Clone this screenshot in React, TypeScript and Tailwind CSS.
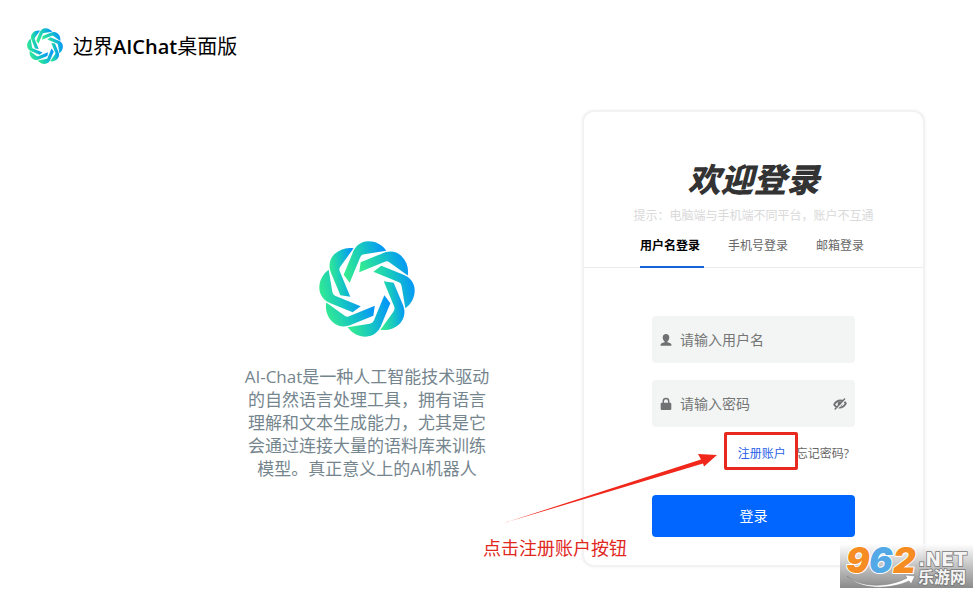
import { useState } from "react";

type Point = [number, number];

const TURNS = [0, 1, 2, 3, 4, 5, 6, 7];

/** One blade of the swirl, turned by an eighth of a circle per step. */
function blade(turn: number): string {
  const a = (turn * Math.PI) / 4;
  const p = ([x, y]: Point) =>
    `${(x * Math.cos(a) - y * Math.sin(a)).toFixed(2)} ${(x * Math.sin(a) + y * Math.cos(a)).toFixed(2)}`;
  return [
    `M${p([-70, -43])}`,
    `L${p([-44, -106])}`,
    `C${p([-36, -129])} ${p([-18, -143])} ${p([4, -143])}`,
    `C${p([26, -143])} ${p([45, -133])} ${p([58, -115])}`,
    `L${p([-8, -104])}`,
    `Q${p([-17, -103])} ${p([-20, -96])}`,
    `L${p([-52, -19])}`,
    "Z",
  ].join(" ");
}

function SwirlLogo({ id, className }: { id: string; className: string }) {
  return (
    <svg viewBox="-144 -144 288 288" className={className} aria-hidden="true">
      <defs>
        <linearGradient id={id} x1="0" y1="0.6" x2="1" y2="0.4">
          <stop offset="0" stopColor="#34ec90" />
          <stop offset="0.5" stopColor="#16c6c2" />
          <stop offset="1" stopColor="#0494fa" />
        </linearGradient>
      </defs>
      {TURNS.map((turn) => (
        <path key={turn} d={blade(turn)} fill={`url(#${id})`} />
      ))}
    </svg>
  );
}

function UserIcon() {
  return (
    <svg viewBox="0 0 12 14" className="h-3.5 w-3 shrink-0" fill="#6f7173" aria-hidden="true">
      <path d="M6 1C3.900 1 2.700 2.500 2.700 4.500C2.700 6.200 3.500 7.700 4.600 8.400V9.300C3.200 9.700 1 10.100 0.600 11.200V12.700H11.400V11.200C11 10.100 8.800 9.700 7.400 9.300V8.400C8.500 7.700 9.300 6.200 9.300 4.500C9.300 2.500 8.100 1 6 1Z" />
    </svg>
  );
}

function LockIcon() {
  return (
    <svg viewBox="0 0 12 14" className="h-3.5 w-3 shrink-0" aria-hidden="true">
      <path d="M3.300 6.500V4.300A2.700 2.700 0 0 1 8.700 4.300V6.500" fill="none" stroke="#6f7173" strokeWidth="1.500" />
      <rect x="0.700" y="5.800" width="10.600" height="7.200" rx="1" fill="#6f7173" />
    </svg>
  );
}

function EyeOffIcon() {
  return (
    <svg viewBox="0 0 14 14" className="h-3.5 w-3.5" fill="none" aria-hidden="true">
      <path d="M1.200 7.600C2.600 4.800 5 3.500 7.400 3.500C9.800 3.500 11.800 4.500 12.800 6.400C11.400 9.200 9.200 10.600 6.700 10.600C4.200 10.600 2.300 9.600 1.200 7.600Z" stroke="#6f7173" strokeWidth="1.900" />
      <circle cx="7" cy="7" r="2.400" fill="#6f7173" />
      <path d="M2.900 13L13.100 2" stroke="#f3f5f5" strokeWidth="1.300" />
      <path d="M1.700 12.500L12 1.500" stroke="#6f7173" strokeWidth="1.400" />
    </svg>
  );
}

const TABS = ["用户名登录", "手机号登录", "邮箱登录"];

function LoginCard() {
  const [active, setActive] = useState(0);
  const [visible, setVisible] = useState(false);

  return (
    <section className="relative w-[343px] shrink-0 rounded-xl border-2 border-[#f2f2f2] bg-white pb-7 shadow-[0_0_3px_#f0f0f0]">
      <h1 className="pt-[46px] text-center text-[33px] leading-11 font-black text-[#333] italic">欢迎登录</h1>
      <p className="mt-1.5 text-center text-xs leading-4 text-[#d9d9d9]">提示：电脑端与手机端不同平台，账户不互通</p>

      <div role="tablist" className="mt-2 flex gap-6 border-b border-[#e9ebee] pl-14">
        {TABS.map((tab, i) => (
          <button
            key={tab}
            type="button"
            role="tab"
            aria-selected={i === active}
            onClick={() => setActive(i)}
            className={
              i === active
                ? "-mb-px border-b-2 border-[#1664d9] pt-1.5 pr-1 pb-3 text-xs leading-4 font-bold text-black"
                : "-mb-px border-b-2 border-transparent pt-1.5 pr-1 pb-3 text-xs leading-4 text-[#666]"
            }
          >
            {tab}
          </button>
        ))}
      </div>

      <form className="mt-12 px-[68px]" onSubmit={(e) => e.preventDefault()}>
        <div className="flex h-[47px] items-center gap-2 rounded bg-[#f3f5f5] px-2">
          <label htmlFor="username" aria-label="用户名">
            <UserIcon />
          </label>
          <input
            id="username"
            type="text"
            placeholder="请输入用户名"
            className="w-full min-w-0 bg-transparent text-sm text-[#333] outline-none placeholder:text-[#757575]"
          />
        </div>
        <div className="mt-[17px] flex h-[47px] items-center gap-2 rounded bg-[#f3f5f5] px-2">
          <label htmlFor="password" aria-label="密码">
            <LockIcon />
          </label>
          <input
            id="password"
            type={visible ? "text" : "password"}
            placeholder="请输入密码"
            className="w-full min-w-0 bg-transparent text-sm text-[#333] outline-none placeholder:text-[#757575]"
          />
          <button type="button" aria-label="显示密码" onClick={() => setVisible(!visible)}>
            <EyeOffIcon />
          </button>
        </div>

        <div className="mt-[19px] flex justify-end gap-2.5 pr-1.5 text-xs leading-4">
          <a href="#register" className="relative text-[#2a5fe8]">
            <span className="absolute -top-3.5 -right-3 -bottom-2 -left-3.5 z-10 rounded-xs border-3 border-[#e8291f] bg-white" />
            <span className="relative z-20">注册账户</span>
          </a>
          <a href="#forgot" className="text-[#666]">
            忘记密码?
          </a>
        </div>

        <button type="submit" className="mt-[33px] h-[42px] w-full rounded bg-[#0066ff] text-sm text-white">
          登录
        </button>
      </form>

      <svg viewBox="0 0 214 74" className="absolute top-[338px] -left-20 z-20 h-[74px] w-[214px]" aria-hidden="true">
        <path d="M0 73L197 9.500L194 4L213 5L200 16.500L199 13.500Z" fill="#f0271a" />
      </svg>
      <p className="absolute bottom-[5px] -left-[101px] z-20 text-lg leading-6 whitespace-nowrap text-[#e0281e]">
        点击注册账户按钮
      </p>
    </section>
  );
}

function SiteBadge() {
  return (
    <div className="absolute right-1.5 bottom-1.5 z-30 h-[44px] w-[133px] bg-linear-to-b from-white/60 to-[#8b8b8b]">
      <svg viewBox="0 0 133 44" className="h-full w-full overflow-visible" aria-hidden="true">
        <path d="M7 32C22 45 50 43 67 34L65 31L75 32L71 40L69 37C49 46 20 46 7 32Z" fill="#fff" stroke="#777" strokeWidth="0.500" />
        <g fontFamily="Inter, sans-serif" fontStyle="italic" fontWeight="900" fontSize="35" stroke="#fff" strokeWidth="2" paintOrder="stroke" strokeLinejoin="round">
          <text x="6" y="29" fill="#f58d22">9</text>
          <text x="29" y="29" fill="#52a9e6">6</text>
          <text x="53" y="29" fill="#f58d22">2</text>
        </g>
        <g fill="#f4f4f4" stroke="#777" strokeWidth="1.500" paintOrder="stroke" fontWeight="700">
          <text x="78" y="22" fontSize="19" fontFamily="DejaVu Sans, sans-serif">.NET</text>
          <text x="78" y="39" fontSize="16" fontFamily="Noto Sans CJK SC, sans-serif">乐游网</text>
        </g>
      </svg>
    </div>
  );
}

export default function App() {
  return (
    <div className="relative min-h-screen overflow-hidden bg-white font-['Open_Sans','Noto_Sans_CJK_SC',sans-serif]">
      <header className="flex items-start gap-2.5 px-[27px] pt-7">
        <SwirlLogo id="swirl-small" className="h-9 w-9" />
        <p className="text-xl leading-[38px] text-black">
          边界<span className="font-semibold">AIChat</span>桌面版
        </p>
      </header>

      <main className="flex items-start justify-end gap-[90px] pt-11 pr-[54px]">
        <section className="flex w-[250px] flex-col items-center pt-[131px]">
          <SwirlLogo id="swirl-large" className="h-24 w-24" />
          <p className="mt-7 text-center text-[17px] leading-[23px] text-[#75858e]">
            AI-Chat是一种人工智能技术驱动的自然语言处理工具，拥有语言理解和文本生成能力，尤其是它会通过连接大量的语料库来训练模型。真正意义上的AI机器人
          </p>
        </section>
        <LoginCard />
      </main>

      <SiteBadge />
    </div>
  );
}
